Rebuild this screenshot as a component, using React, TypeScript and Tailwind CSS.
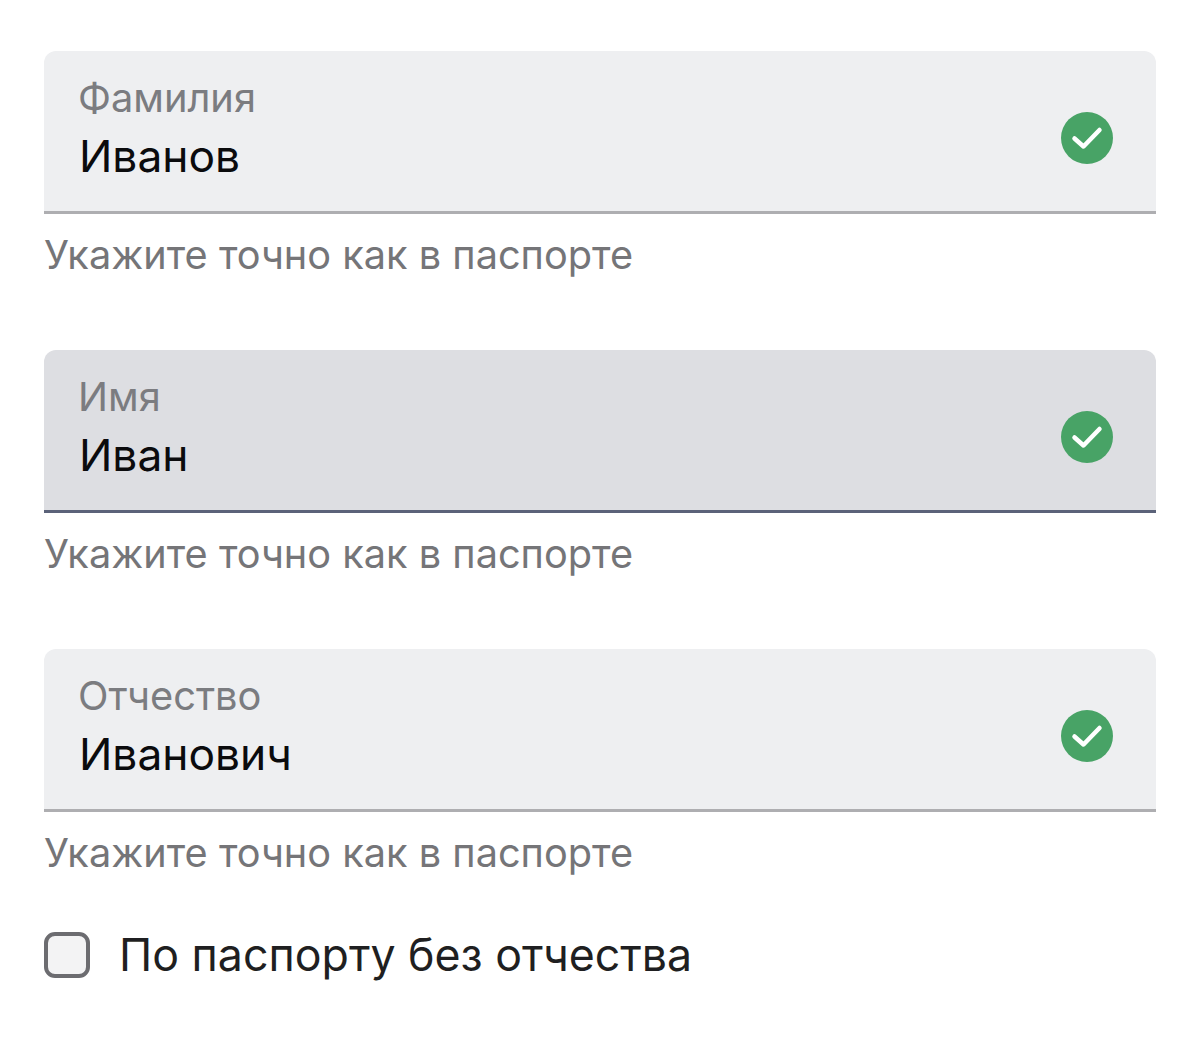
const font = { fontFamily: '"Inter", "Noto Sans", sans-serif' };

function CheckBadge() {
  return (
    <svg width="52" height="52" viewBox="0 0 52 52" className="mt-[14px] shrink-0">
      <circle cx="26" cy="26" r="26" fill="#48a366" />
      <path d="M13.5 26.5L22.5 34.5L38.5 18" fill="none" stroke="#fff" strokeWidth="4.5" strokeLinecap="round" strokeLinejoin="round" />
    </svg>
  );
}

function Field({ label, value, active }: { label: string; value: string; active?: boolean }) {
  return (
    <div className="h-[262px]">
      <div
        className={`flex h-[163px] items-center justify-between rounded-t-xl border-b-[3px] pl-[34px] pr-[43px] ${
          active ? "border-[#5b6279] bg-[#dddee2]" : "border-[#aeaeb1] bg-[#eeeff1]"
        }`}
      >
        <div className="pt-[1px]">
          <div className="text-[39.8px] leading-[46px] text-[#7b7c80]">{label}</div>
          <div className="ml-[1px] mt-[2px] text-[44.3px] leading-[66px] text-[#0b0b0d]">{value}</div>
        </div>
        <CheckBadge />
      </div>
      <div className="mt-[19px] text-[39.7px] leading-[44px] text-[#757578]">Укажите точно как в паспорте</div>
    </div>
  );
}

export default function App() {
  return (
    <div className="h-[1049px] w-[1200px] overflow-hidden bg-white px-[44px] pt-[51px]" style={font}>
      <div className="flex flex-col gap-[37px]">
        <Field label="Фамилия" value="Иванов" />
        <Field label="Имя" value="Иван" active />
        <Field label="Отчество" value="Иванович" />
      </div>
      <div className="mt-[17px] flex items-center gap-[29px]">
        <div className="h-[46px] w-[46px] rounded-[11px] border-4 border-[#6c6c70] bg-[#f3f3f4]" />
        <span className="text-[44.7px] leading-[54px] text-[#1f1f21]">По паспорту без отчества</span>
      </div>
    </div>
  );
}
